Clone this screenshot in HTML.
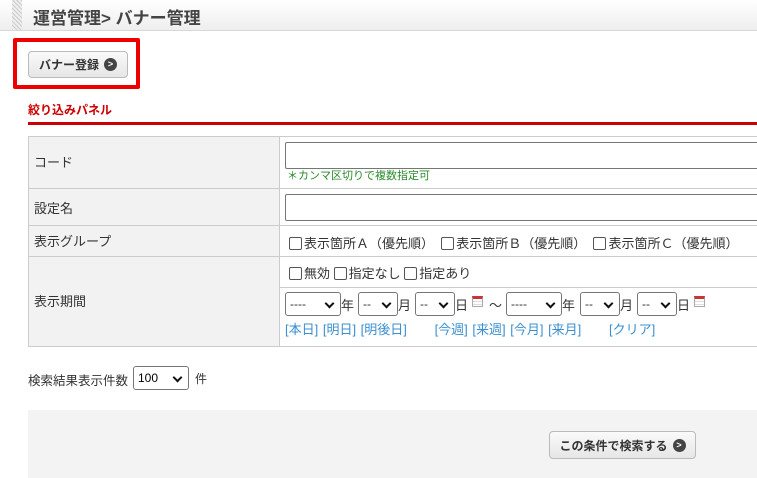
<!DOCTYPE html><html><head><meta charset="utf-8"><style>
body{margin:0;width:757px;height:478px;overflow:hidden;background:#fff;font-family:"Liberation Sans","Noto Sans CJK JP",sans-serif;font-size:12px;color:#333;position:relative}
.a{position:absolute}
.btn{position:absolute;border:1px solid #bbb;border-radius:4px;background:linear-gradient(#fafafa,#e6e6e6);font-size:12px;font-weight:bold;color:#333;box-sizing:border-box;display:flex;align-items:center;justify-content:center;gap:5px}
.ic{width:13px;height:13px;border-radius:50%;background:#444;color:#fff;font-size:9px;line-height:13px;text-align:center}
.sel{position:absolute;border:1px solid #767676;border-radius:3px;background:#fff;box-sizing:border-box;height:24px;font-size:12px;padding-left:4px;line-height:22px}
.sel:after{content:"";position:absolute;right:7px;top:7px;width:5px;height:5px;border-right:2px solid #111;border-bottom:2px solid #111;transform:rotate(45deg)}
.cb{display:inline-block;width:11px;height:11px;border:1px solid #555;border-radius:2px;vertical-align:-2px;margin-right:2px;background:#fff}
.cal{position:absolute;width:11px;height:11px;border:1px solid #aaa;border-top:3px solid #c33;background:repeating-linear-gradient(#fff 0 2px,#ddd 2px 3px);box-sizing:border-box}
.lk{color:#3a8fd0}
.t{font-size:13px}
</style></head><body>
<div class="a" style="left:0;top:0;width:757px;height:30px;background:linear-gradient(#fff,#eee);border-bottom:1px solid #d8d8d8"></div>
<div class="a" style="left:12px;top:0;width:10px;height:30px;background:repeating-linear-gradient(45deg,#ccc 0 1px,#eee 1px 3px)"></div>
<div class="a" style="left:33px;top:4px;font-size:17px;font-weight:bold;color:#444">運営管理&gt; バナー管理</div>
<div class="a" style="left:13px;top:38px;width:127px;height:51px;border:4px solid #e00;box-sizing:border-box;border-radius:2px"></div>
<div class="btn" style="left:28px;top:51px;width:100px;height:27px">バナー登録<span class="ic">&gt;</span></div>
<div class="a" style="left:28px;top:101px;font-size:12px;font-weight:bold;color:#c00">絞り込みパネル</div>
<div class="a" style="left:28px;top:122px;width:729px;height:3px;background:#c00"></div>
<div class="a" style="left:28px;top:136px;width:252px;height:210px;background:#f2f2f2"></div>
<div class="a" style="left:28px;top:136px;width:729px;height:209px;border-top:1px solid #ccc;border-bottom:1px solid #ccc;border-left:1px solid #ccc"></div>
<div class="a" style="left:279px;top:136px;width:1px;height:210px;background:#ccc"></div>
<div class="a" style="left:28px;top:188px;width:729px;height:1px;background:#ccc"></div>
<div class="a" style="left:28px;top:225px;width:729px;height:1px;background:#ccc"></div>
<div class="a" style="left:28px;top:256px;width:729px;height:1px;background:#ccc"></div>
<div class="a" style="left:280px;top:287px;width:477px;height:1px;background:#ccc"></div>
<div class="a t" style="left:34px;top:152px">コード</div>
<div class="a t" style="left:34px;top:198px">設定名</div>
<div class="a t" style="left:34px;top:231px">表示グループ</div>
<div class="a t" style="left:34px;top:291px">表示期間</div>
<div class="a" style="left:285px;top:142px;width:480px;height:25px;border:1px solid #767676;border-radius:2px"></div>
<div class="a" style="left:287px;top:167px;font-size:11px;color:#2a8a2a">＊カンマ区切りで複数指定可</div>
<div class="a" style="left:285px;top:194px;width:480px;height:25px;border:1px solid #767676;border-radius:2px"></div>
<div class="a t" style="left:289px;top:233px;white-space:nowrap"><span class="cb"></span>表示箇所Ａ（優先順）&nbsp; <span class="cb"></span>表示箇所Ｂ（優先順）&nbsp; <span class="cb"></span>表示箇所Ｃ（優先順）</div>
<div class="a t" style="left:289px;top:263px;white-space:nowrap"><span class="cb"></span>無効 <span class="cb"></span>指定なし <span class="cb"></span>指定あり</div>
<div class="sel" style="left:285px;top:292px;width:56px">----</div><div class="a t" style="left:341px;top:295px">年</div>
<div class="sel" style="left:358px;top:292px;width:40px">--</div><div class="a t" style="left:398px;top:295px">月</div>
<div class="sel" style="left:415px;top:292px;width:40px">--</div><div class="a t" style="left:455px;top:295px">日</div>
<div class="cal" style="left:472px;top:296px"></div><div class="a t" style="left:489px;top:295px">～</div>
<div class="sel" style="left:506px;top:292px;width:56px">----</div><div class="a t" style="left:562px;top:295px">年</div>
<div class="sel" style="left:580px;top:292px;width:40px">--</div><div class="a t" style="left:620px;top:295px">月</div>
<div class="sel" style="left:637px;top:292px;width:40px">--</div><div class="a t" style="left:677px;top:295px">日</div>
<div class="cal" style="left:694px;top:296px"></div>
<div class="a lk t" style="left:285px;top:319px;white-space:nowrap;word-spacing:1px">[本日] [明日] [明後日]&nbsp;&nbsp;&nbsp;&nbsp;&nbsp; [今週] [来週] [今月] [来月]&nbsp;&nbsp;&nbsp;&nbsp;&nbsp; [クリア]</div>
<div class="a" style="left:28px;top:370px;font-size:12.5px">検索結果表示件数</div>
<div class="sel" style="left:133px;top:366px;width:56px;color:#000">100</div>
<div class="a" style="left:195px;top:370px">件</div>
<div class="a" style="left:28px;top:410px;width:729px;height:68px;background:#f3f3f3"></div>
<div class="btn" style="left:549px;top:431px;width:147px;height:28px">この条件で検索する<span class="ic">&gt;</span></div>
</body></html>
